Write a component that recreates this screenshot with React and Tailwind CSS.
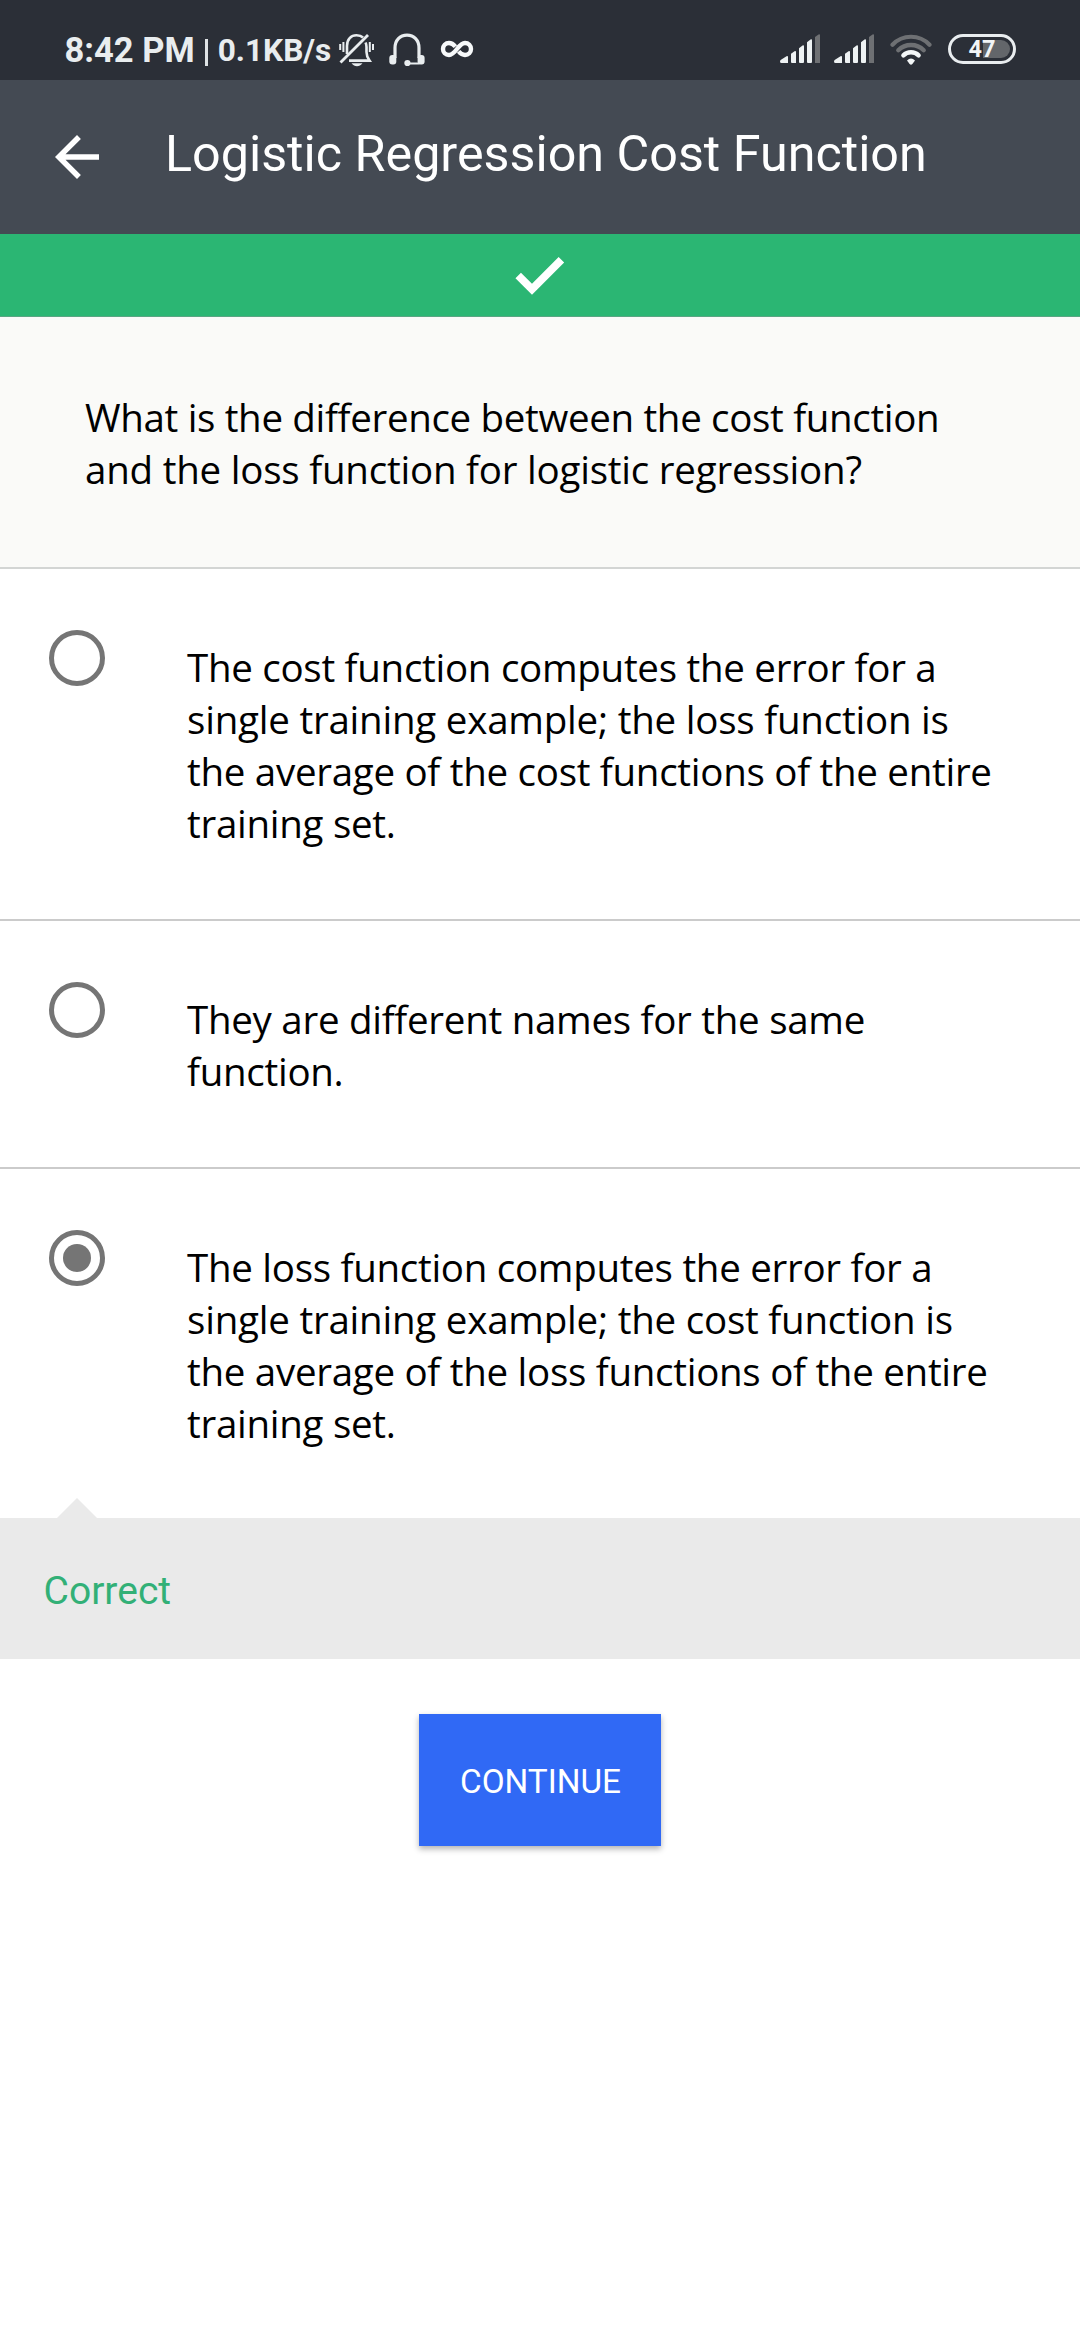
import React from "react";

function BellOff() {
  return (
    <svg className="ml-[8px] mt-[33px] h-[34px] w-[36px] shrink-0" viewBox="0 0 36 34" fill="none" stroke="#e9edef">
      <path d="M8 21V13C8 6 12 2.3 17.5 2.3C20.5 2.3 22.5 3 24 4.5" strokeWidth="2.6" />
      <path d="M26.5 9.5C27.3 11 27.5 12.5 27.5 14V19C27.5 23 29 25.5 30.5 27.6H10" strokeWidth="2.6" />
      <path d="M1.5 29.5L29 2" strokeWidth="2.8" />
      <path d="M1.2 11V17M4.4 9V19M30.8 9V19M34 11V17" strokeWidth="2" />
      <path d="M12.5 30.3H23.5C22 32.2 20 33.2 18 33.2S14 32.2 12.5 30.3Z" fill="#e9edef" stroke="none" />
    </svg>
  );
}

function Headset() {
  return (
    <svg className="ml-[14px] mt-[33px] h-[34px] w-[36px] shrink-0" viewBox="0 0 36 34" fill="none" stroke="#e9edef">
      <path d="M6 25V15C6 7 11 2.2 18 2.2S30 7 30 15V25" strokeWidth="3.2" />
      <rect x="0.3" y="22" width="7" height="9.5" rx="3" fill="#e9edef" stroke="none" />
      <rect x="28.6" y="22" width="7" height="9.5" rx="3" fill="#e9edef" stroke="none" />
      <path d="M30.5 30.5H18" strokeWidth="2" />
      <circle cx="18.4" cy="30" r="3.1" fill="#e9edef" stroke="none" />
    </svg>
  );
}

function Infinity() {
  return (
    <svg className="ml-[15px] mt-[40px] h-[18px] w-[34px] shrink-0" viewBox="0 0 34 18" fill="none" stroke="#f7f9fa" strokeWidth="4.4">
      <path d="M15.4 6.6C13.4 4.2 11.6 3 9 3C5.5 3 3 5.6 3 9S5.5 15 9 15C12 15 13.8 13.2 17 9C20.2 4.8 22 3 25 3C28.5 3 31 5.6 31 9S28.5 15 25 15C22.4 15 20.6 13.8 18.6 11.4" />
    </svg>
  );
}

function Signal() {
  return (
    <svg className="h-[30px] w-[40px] shrink-0" viewBox="0 0 40 30" fill="#eef2f3">
      <path d="M0 27.5Q0 26.3 1 25.7L6.5 22.2Q8 21.6 8 23V29H1.5Q0 29 0 27.5Z" />
      <path d="M11 19.8L14.5 17.3Q16 16.6 16 18V29H12Q11 29 11 28Z" />
      <path d="M19 14.3L22.5 11.6Q24 10.9 24 12.3V28Q24 29 23 29H20Q19 29 19 28Z" />
      <path d="M27 8.3L30.5 5.6Q32 4.9 32 6.3V28Q32 29 31 29H28Q27 29 27 28Z" />
      <path d="M35 3L38.5 0.4Q40 -0.2 40 1V29H35Z" fill="#6e7073" />
    </svg>
  );
}

function Wifi() {
  return (
    <svg className="ml-[16px] h-[32px] w-[42px] shrink-0" viewBox="0 0 42 32" fill="none" strokeLinecap="round">
      <path d="M2.5 10.7A25.5 25.5 0 0 1 39.5 10.7" stroke="#6e7073" strokeWidth="4.2" />
      <path d="M8.3 16.2A18 18 0 0 1 33.7 16.2" stroke="#6e7073" strokeWidth="4.4" />
      <path d="M13.4 21.4A10.8 10.8 0 0 1 28.6 21.4" stroke="#f3f6f7" strokeWidth="4.4" />
      <path d="M17 26.6Q21 22.4 25 26.6L22.4 30Q21 31.4 19.6 30Z" fill="#f3f6f7" />
    </svg>
  );
}

function Battery() {
  return (
    <div className="relative ml-[16px] flex h-[30px] w-[68px] items-center justify-center rounded-full border-3 border-[#e9edef]">
      <div className="absolute top-[3px] right-[3px] h-[18px] w-[27px] rounded-r-full bg-[#63666a]" />
      <span className="relative mt-[2px] text-[23.5px] leading-none font-bold text-[#f2f5f6]">47</span>
    </div>
  );
}

function Option({ lines, selected, last }) {
  return (
    <div className={last ? "flex pt-[72px] pb-[69px]" : "flex border-b-2 border-[#cbcbcb] pt-[72px] pb-[70px]"}>
      <div className="-mt-[11px] ml-[49px] flex h-[56px] w-[56px] shrink-0 items-center justify-center rounded-full border-[5.5px] border-[#757575]">
        {selected && <div className="h-[28px] w-[28px] rounded-full bg-[#757575]" />}
      </div>
      <p className="ml-[82px] font-['Open_Sans',sans-serif] text-[38.5px] leading-[52px] tracking-[-0.28px] whitespace-nowrap text-black">
        {lines.map((line) => (
          <span key={line} className={line.startsWith("single") ? "block tracking-[-0.22px]" : "block"}>{line}</span>
        ))}
      </p>
    </div>
  );
}

const options = [
  ["The cost function computes the error for a", "single training example; the loss function is", "the average of the cost functions of the entire", "training set."],
  ["They are different names for the same", "function."],
  ["The loss function computes the error for a", "single training example; the cost function is", "the average of the loss functions of the entire", "training set."],
];

export default function App() {
  return (
    <div className="flex h-[2340px] w-[1080px] flex-col bg-white font-[Roboto,sans-serif]">
      <div className="flex h-[80px] shrink-0 items-start bg-[#2b2f37] text-[#e9edef]">
        <span className="ml-[64.5px] text-[34.5px] leading-[100px] font-bold whitespace-nowrap">8:42 PM</span>
        <div className="mt-[39px] ml-[10px] h-[27px] w-[3px] shrink-0 bg-[#dfe3e5]" />
        <span className="ml-[10px] text-[31.6px] leading-[102px] font-bold whitespace-nowrap">0.1KB/s</span>
        <BellOff />
        <Headset />
        <Infinity />
        <div className="mt-[34px] mr-[64px] ml-auto flex items-start">
          <Signal />
          <div className="w-[14px]" />
          <Signal />
          <Wifi />
          <Battery />
        </div>
      </div>

      <header className="flex h-[154px] shrink-0 items-start bg-[#444a53] text-white">
        <svg className="mt-[44px] ml-[44px] h-[66px] w-[66px] shrink-0" viewBox="0 0 24 24" fill="#fff">
          <path d="M20 11H7.83l5.59-5.59L12 4l-8 8 8 8 1.41-1.41L7.83 13H20v-2z" />
        </svg>
        <h1 className="ml-[55px] text-[50.25px] leading-[148px] whitespace-nowrap">Logistic Regression Cost Function</h1>
      </header>

      <div className="flex h-[83px] shrink-0 justify-center border-b border-[#5aa583] bg-[#2bb673]">
        <svg className="mt-[22px] h-[40px] w-[50px]" viewBox="0 0 50 40" fill="none" stroke="#fff" strokeWidth="7.8">
          <path d="M3.2 19.4L17 33.2L46.4 3.8" />
        </svg>
      </div>

      <section className="border-b-2 border-[#d3d5d4] bg-[#fafaf8] pt-[74px] pb-[72px] pl-[85px]">
        <p className="font-['Open_Sans',sans-serif] text-[38.5px] leading-[52px] whitespace-nowrap text-black">
          <span className="block tracking-[-0.33px]">What is the difference between the cost function</span>
          <span className="block tracking-[-0.22px]">and the loss function for logistic regression?</span>
        </p>
      </section>

      {options.map((lines, i) => (
        <Option key={lines[0]} lines={lines} selected={i === 2} last={i === 2} />
      ))}

      <div className="relative h-[141px] shrink-0 bg-[#eaeaea] pl-[43.5px]">
        <svg className="absolute -top-[20px] left-[57px] h-[20px] w-[40px]" viewBox="0 0 40 20" fill="#eaeaea">
          <path d="M0 20L20 0L40 20Z" />
        </svg>
        <p className="text-[39px] leading-[146px] text-[#32b077]">Correct</p>
      </div>

      <button className="mt-[55px] h-[132px] w-[242px] shrink-0 self-center bg-[#3069f5] pt-[3px] pl-[1px] text-[33.3px] leading-[129px] text-white shadow-[0_3px_6px_rgba(0,0,0,0.3)]">
        CONTINUE
      </button>
    </div>
  );
}
